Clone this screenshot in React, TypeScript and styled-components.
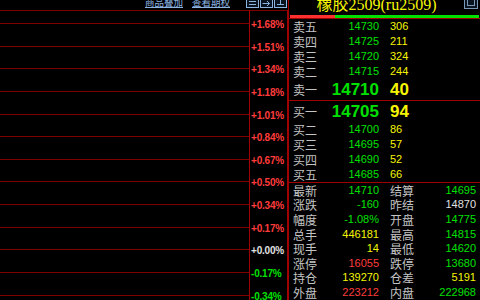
import React from 'react';
import styled, { createGlobalStyle } from 'styled-components';

const Global = createGlobalStyle`
  html, body { margin: 0; padding: 0; background: #000; }
  body { font-family: "Liberation Sans", "Noto Sans CJK SC", sans-serif; }
`;

const LINE = '#800000';
const BORDER = '#a00000';
const GREEN = '#00e000';
const YELLOW = '#f5f500';
const RED = '#ff3c3c';
const WHITE = '#e0e0e0';
const LABEL = '#c4c4c4';
const LINK = '#8cb4e0';

const Page = styled.div`
  display: flex;
  width: 480px;
  height: 300px;
  overflow: hidden;
  background: #000;
`;

const ChartArea = styled.div`
  width: 288px;
  flex: none;
  display: flex;
  flex-direction: column;
`;

const Toolbar = styled.div`
  height: 10px;
  flex: none;
  box-sizing: border-box;
  overflow: hidden;
  display: flex;
  align-items: flex-end;
  justify-content: flex-end;
  padding-bottom: 2px;
`;

const ToolLink = styled.span<{ $gap: number }>`
  font-family: "Noto Sans CJK SC", sans-serif;
  font-size: 9.5px;
  line-height: 10px;
  color: ${LINK};
  border-bottom: 1px solid ${LINK};
  margin-right: ${(p) => p.$gap}px;
  white-space: nowrap;
`;

const ToolButtons = styled.div`
  display: flex;
  gap: 1px;
  margin-right: 1px;
`;

const ToolBtn = styled.svg`
  display: block;
  width: 13px;
  height: 14px;
`;

const ChartBody = styled.div`
  flex: 1 0 auto;
  display: flex;
  border-top: 1px solid ${LINE};
`;

const GridCol = styled.div`
  width: 249px;
  flex: none;
  display: flex;
  flex-direction: column;
`;

const GridSpacer = styled.div`
  height: 12px;
  flex: none;
`;

const GridRow = styled.div`
  height: 22.64px;
  flex: none;
  box-sizing: border-box;
  border-top: 1px solid ${LINE};
`;

const Scale = styled.div`
  width: 37px;
  flex: none;
  border-left: 1px solid ${BORDER};
  border-right: 1px solid ${BORDER};
  padding-top: 3px;
  display: flex;
  flex-direction: column;
`;

const Tick = styled.div<{ $color: string }>`
  height: 22.64px;
  flex: none;
  line-height: 22.64px;
  font-size: 10px;
  font-weight: bold;
  letter-spacing: -0.2px;
  padding-left: 1px;
  color: ${(p) => p.$color};
  white-space: nowrap;
`;

const QuotePanel = styled.div`
  flex: 1;
  border-left: 1px solid ${BORDER};
  display: flex;
  flex-direction: column;
`;

const TitleRow = styled.div`
  height: 15px;
  flex: none;
  display: flex;
  align-items: flex-start;
`;

const Title = styled.div`
  flex: 1;
  text-align: center;
  font-family: "Liberation Serif", "Noto Sans CJK SC", serif;
  font-size: 16px;
  line-height: 10px;
  color: ${YELLOW};
  white-space: nowrap;
`;

const CornerIcon = styled.svg`
  display: block;
  width: 14px;
  height: 9px;
  margin-right: 2px;
`;

const Bar = styled.div`
  display: flex;
  flex: none;
  height: 3px;
  margin: 0 1px;
`;

const BarSeg = styled.div<{ $grow: number; $color: string }>`
  flex: ${(p) => p.$grow} 1 0;
  background: ${(p) => p.$color};
`;

const BarLine = styled.div`
  height: 1px;
  flex: none;
  background: ${BORDER};
`;

const Section = styled.div`
  display: flex;
  flex: none;
  flex-direction: column;
  border-bottom: 1px solid ${BORDER};
`;

const QuoteRow = styled.div<{ $big?: boolean }>`
  display: grid;
  grid-template-columns: 36px 50px 1fr;
  align-items: center;
  height: ${(p) => (p.$big ? 21 : 15)}px;
  padding-left: 4px;
`;

const Label = styled.span`
  font-family: "Noto Sans CJK SC", sans-serif;
  font-size: 12px;
  line-height: 13px;
  color: ${LABEL};
  white-space: nowrap;
`;

const Num = styled.span<{ $color: string; $big?: boolean }>`
  font-size: ${(p) => (p.$big ? 17 : 11)}px;
  font-weight: ${(p) => (p.$big ? 'bold' : 'normal')};
  line-height: ${(p) => (p.$big ? 20 : 13)}px;
  color: ${(p) => p.$color};
  white-space: nowrap;
`;

const Price = styled(Num)`
  text-align: right;
`;

const Vol = styled(Num)`
  padding-left: 11px;
`;

const Stats = styled.div`
  display: grid;
  grid-template-columns: 36px 50px 51px 1fr;
  grid-auto-rows: 14.6px;
  align-items: center;
  padding: 0 4px;
`;

const StatLabel2 = styled(Label)`
  padding-left: 11px;
`;

const StatValue = styled(Num)`
  text-align: right;
`;

const ticks: [string, string][] = [
  ['+1.68%', RED],
  ['+1.51%', RED],
  ['+1.34%', RED],
  ['+1.18%', RED],
  ['+1.01%', RED],
  ['+0.84%', RED],
  ['+0.67%', RED],
  ['+0.50%', RED],
  ['+0.34%', RED],
  ['+0.17%', RED],
  ['+0.00%', WHITE],
  ['-0.17%', GREEN],
  ['-0.34%', GREEN],
];

const sells = [
  ['卖五', '14730', '306'],
  ['卖四', '14725', '211'],
  ['卖三', '14720', '324'],
  ['卖二', '14715', '244'],
];
const buys = [
  ['买二', '14700', '86'],
  ['买三', '14695', '57'],
  ['买四', '14690', '52'],
  ['买五', '14685', '66'],
];

const stats: [string, string, string, string, string, string][] = [
  ['最新', '14710', GREEN, '结算', '14695', GREEN],
  ['涨跌', '-160', GREEN, '昨结', '14870', WHITE],
  ['幅度', '-1.08%', GREEN, '开盘', '14775', GREEN],
  ['总手', '446181', YELLOW, '最高', '14815', GREEN],
  ['现手', '14', YELLOW, '最低', '14620', GREEN],
  ['涨停', '16055', RED, '跌停', '13680', GREEN],
  ['持仓', '139270', YELLOW, '仓差', '5191', YELLOW],
  ['外盘', '223212', RED, '内盘', '222968', GREEN],
];

const BtnIcon = ({ kind }: { kind: number }) => (
  <ToolBtn viewBox="0 0 13 14">
    <rect x="0.5" y="0.5" width="12" height="13" fill="#0a1420" stroke={LINK} />
    {kind === 0 && <path d="M3 7.5h7M3 10.5h7" stroke={LINK} fill="none" />}
    {kind === 1 && <path d="M2.5 9.5h7M7 7l2.5 2.5L7 12" stroke={LINK} fill="none" />}
    {kind === 2 && <path d="M6.5 3v7.5M3 10.5h7" stroke={LINK} fill="none" />}
  </ToolBtn>
);

export default function App() {
  return (
    <>
      <Global />
      <Page>
        <ChartArea>
          <Toolbar>
            <ToolLink $gap={9}>商品叠加</ToolLink>
            <ToolLink $gap={16}>查看期权</ToolLink>
            <ToolButtons>
              <BtnIcon kind={0} />
              <BtnIcon kind={1} />
              <BtnIcon kind={2} />
            </ToolButtons>
          </Toolbar>
          <ChartBody>
            <GridCol>
              <GridSpacer />
              {ticks.map(([t]) => (
                <GridRow key={t} />
              ))}
            </GridCol>
            <Scale>
              {ticks.map(([t, c]) => (
                <Tick key={t} $color={c}>
                  {t}
                </Tick>
              ))}
            </Scale>
          </ChartBody>
        </ChartArea>
        <QuotePanel>
          <TitleRow>
            <Title>橡胶2509(ru2509)</Title>
            <CornerIcon viewBox="0 0 14 9">
              <rect x="0.5" y="-4" width="13" height="12.5" fill="#0a1420" stroke="#7a98b8" />
              <rect x="3.5" y="-2" width="7" height="7.5" fill="none" stroke="#7a98b8" />
            </CornerIcon>
          </TitleRow>
          <Bar>
            <BarSeg $grow={45} $color="#ff3030" />
            <BarSeg $grow={144} $color="#00e000" />
          </Bar>
          <BarLine />
          <Section>
            {sells.map(([l, p, v]) => (
              <QuoteRow key={l}>
                <Label>{l}</Label>
                <Price $color={GREEN}>{p}</Price>
                <Vol $color={YELLOW}>{v}</Vol>
              </QuoteRow>
            ))}
            <QuoteRow $big>
              <Label>卖一</Label>
              <Price $big $color={GREEN}>14710</Price>
              <Vol $big $color={YELLOW}>40</Vol>
            </QuoteRow>
          </Section>
          <Section>
            <QuoteRow $big>
              <Label>买一</Label>
              <Price $big $color={GREEN}>14705</Price>
              <Vol $big $color={YELLOW}>94</Vol>
            </QuoteRow>
            {buys.map(([l, p, v]) => (
              <QuoteRow key={l}>
                <Label>{l}</Label>
                <Price $color={GREEN}>{p}</Price>
                <Vol $color={YELLOW}>{v}</Vol>
              </QuoteRow>
            ))}
          </Section>
          <Stats>
            {stats.map(([l1, v1, c1, l2, v2, c2]) => (
              <React.Fragment key={l1}>
                <Label>{l1}</Label>
                <StatValue $color={c1}>{v1}</StatValue>
                <StatLabel2>{l2}</StatLabel2>
                <StatValue $color={c2}>{v2}</StatValue>
              </React.Fragment>
            ))}
          </Stats>
        </QuotePanel>
      </Page>
    </>
  );
}
